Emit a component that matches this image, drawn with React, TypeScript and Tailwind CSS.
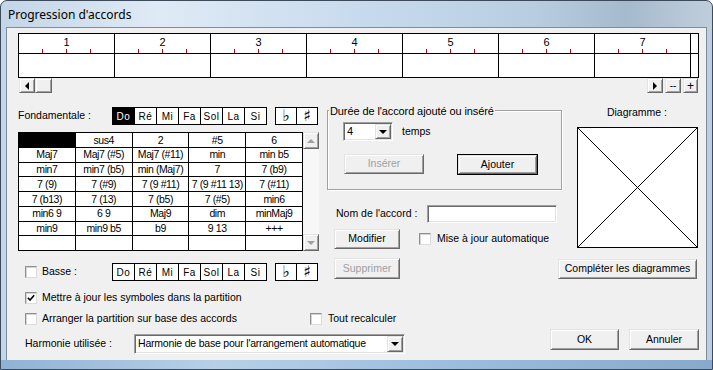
import React from "react";

const sans = "font-['Liberation_Sans',Arial,sans-serif]";
const raised =
  "bg-[#f0f0f0] border border-t-[#e3e3e3] border-l-[#e3e3e3] border-r-[#696969] border-b-[#696969] shadow-[inset_1px_1px_0_#ffffff,inset_-1px_-1px_0_#a0a0a0]";
const sunken =
  "bg-white border border-t-[#a0a0a0] border-l-[#a0a0a0] border-r-white border-b-white shadow-[inset_1px_1px_0_#696969,inset_-1px_-1px_0_#e3e3e3]";

const notes = ["Do", "Ré", "Mi", "Fa", "Sol", "La", "Si"];

const chords = [
  ["", "sus4", "2", "#5", "6"],
  ["Maj7", "Maj7 (#5)", "Maj7 (#11)", "min", "min b5"],
  ["min7", "min7 (b5)", "min (Maj7)", "7", "7 (b9)"],
  ["7 (9)", "7 (#9)", "7 (9 #11)", "7 (9 #11 13)", "7 (#11)"],
  ["7 (b13)", "7 (13)", "7 (b5)", "7 (#5)", "min6"],
  ["min6 9", "6 9", "Maj9", "dim", "minMaj9"],
  ["min9", "min9 b5", "b9", "9 13", "+++"],
  ["", "", "", "", ""],
];

function Btn({
  className = "",
  disabled = false,
  children,
}: {
  className?: string;
  disabled?: boolean;
  children?: React.ReactNode;
}) {
  return (
    <div
      className={`flex items-center justify-center text-[10.5px] ${raised} ${
        disabled ? "text-[#a0a0a0]" : "text-black"
      } ${className}`}
    >
      {children}
    </div>
  );
}

function Check({ checked = false }: { checked?: boolean }) {
  return (
    <div className="w-[12px] h-[12px] shrink-0 bg-white border border-[#8f8f8f] border-r-[#dcdcdc] border-b-[#dcdcdc] shadow-[inset_1px_1px_0_#d4d4d4] flex items-center justify-center">
      {checked && (
        <svg width="8" height="8" viewBox="0 0 8 8">
          <path d="M0.8 3.8 L3 6 L7.2 1.2" fill="none" stroke="#000" strokeWidth="1.6" />
        </svg>
      )}
    </div>
  );
}

function Arrow({ dir, color = "#000" }: { dir: "l" | "r" | "u" | "d"; color?: string }) {
  const pts = {
    l: "4,0 4,8 0,4",
    r: "0,0 0,8 4,4",
    u: "0,4 8,4 4,0",
    d: "0,0 8,0 4,4",
  }[dir];
  const w = dir === "l" || dir === "r" ? 4 : 8;
  const h = dir === "l" || dir === "r" ? 8 : 4;
  return (
    <svg width={w} height={h} viewBox={`0 0 ${w} ${h}`}>
      <polygon points={pts} fill={color} />
    </svg>
  );
}

function NoteRow({ selected }: { selected: number }) {
  return (
    <div className="flex items-stretch h-[18px]">
      <div className="flex border-l border-t border-b border-black bg-white">
        {notes.map((n, i) => (
          <div
            key={n}
            className={`w-[22px] border-r border-black flex items-center justify-center text-[10px] tracking-[0.5px] ${
              i === selected ? "bg-black text-white" : "text-black"
            }`}
          >
            {n}
          </div>
        ))}
      </div>
      <div className="ml-[8px] flex border-l border-t border-b border-black bg-white overflow-hidden">
        <div className="w-[21px] border-r border-black flex items-end justify-center text-[16px] leading-[17px] font-['DejaVu_Sans',sans-serif]">
          ♭
        </div>
        <div className="w-[21px] border-r border-black flex items-center justify-center text-[16px] leading-none font-bold font-['DejaVu_Sans',sans-serif]">
          ♯
        </div>
      </div>
    </div>
  );
}

export default function App() {
  return (
    <div
      className={`w-[713px] h-[370px] overflow-hidden rounded-t-[7px] border border-[#3c4a59] flex flex-col bg-[linear-gradient(90deg,#c3d5e8_0%,#dfeaf5_22%,#c8dbee_50%,#b9cde1_75%,#a6bacd_88%,#bfcedc_100%)] ${sans}`}
    >
      {/* title bar */}
      <div className="h-[27px] shrink-0 flex items-center pl-[7px] pt-[1px] text-[12px] text-black font-['Noto_Sans',sans-serif]">
        Progression d'accords
      </div>

      <div className="flex flex-1 min-h-0">
        <div className="w-[6px] shrink-0" />
        <div className="w-[699px] bg-[#f0f0f0] outline outline-1 outline-[#7d8d9c] flex flex-col pl-[11px] text-[10.5px] text-black">
          {/* ruler */}
          <div className="mt-[5px] flex w-[681px] h-[45px] border border-black bg-white">
            {[1, 2, 3, 4, 5, 6, 7].map((n) => (
              <div key={n} className="w-[96px] border-r border-black flex flex-col">
                <div className="h-[20px] border-b border-black flex flex-col">
                  <div className="h-[15px] flex items-center justify-center text-[11px] leading-none pt-[2px]">{n}</div>
                  <div className="h-[4px] flex pl-[23px] gap-[23px]">
                    <div className="w-px h-full bg-[#c00000]" />
                    <div className="w-px h-full bg-[#c00000]" />
                    <div className="w-px h-full bg-[#c00000]" />
                  </div>
                </div>
                <div className="flex-1" />
              </div>
            ))}
            <div className="flex-1 flex flex-col">
              <div className="h-[20px] border-b border-black" />
            </div>
          </div>

          {/* ruler scrollbar */}
          <div className="flex h-[16px] w-[681px] pl-[1px] items-start">
            <Btn className="w-[16px] h-[15px]">
              <Arrow dir="l" />
            </Btn>
            <Btn className="w-[17px] h-[15px]" />
            <div className="flex-1" />
            <Btn className="w-[16px] h-[15px]">
              <Arrow dir="r" />
            </Btn>
            <Btn className="ml-[2px] w-[16px] h-[15px] text-[10px] leading-none">--</Btn>
            <Btn className="ml-[2px] mr-[1px] w-[15px] h-[15px] text-[12px] leading-none">+</Btn>
          </div>

          {/* middle section */}
          <div className="flex h-[194px]">
            {/* left column */}
            <div className="w-[301px] flex flex-col">
              <div className="mt-[13px] flex items-center">
                <div className="w-[94px]">Fondamentale :</div>
                <NoteRow selected={0} />
              </div>

              <div className="mt-[7px] flex">
                <div className="w-[286px] h-[119px] grid grid-cols-5 grid-rows-8 gap-px p-px bg-black">
                  {chords.flatMap((row, r) =>
                    row.map((c, i) => (
                      <div
                        key={`${r}-${i}`}
                        className={`flex items-center justify-center leading-none whitespace-nowrap overflow-hidden text-[10.5px] tracking-[-0.4px] ${
                          r === 0 && i === 0 ? "bg-black" : "bg-white"
                        }`}
                      >
                        {c}
                      </div>
                    ))
                  )}
                </div>
                <div className="w-[16px] h-[119px] flex flex-col bg-[#f7f7f7]">
                  <Btn className="w-[16px] h-[17px]">
                    <Arrow dir="u" color="#a0a0a0" />
                  </Btn>
                  <div className="flex-1" />
                  <Btn className="w-[16px] h-[17px]">
                    <Arrow dir="d" color="#a0a0a0" />
                  </Btn>
                </div>
              </div>

              <div className="mt-[12px] flex items-center pl-[7px]">
                <Check />
                <div className="ml-[5px] w-[70px]">Basse :</div>
                <NoteRow selected={-1} />
              </div>
            </div>

            {/* middle column */}
            <div className="ml-[8px] w-[235px] flex flex-col">
              <div className="mt-[16px] relative h-[80px] border border-[#a0a0a0] shadow-[inset_1px_1px_0_#ffffff,1px_1px_0_#ffffff] pl-[15px] pt-[11px]">
                <div className="absolute -top-[8px] left-[1px] px-[1px] bg-[#f0f0f0] text-[11px] tracking-[-0.1px]">
                  Durée de l'accord ajouté ou inséré
                </div>
                <div className="flex items-center">
                  <div className={`w-[50px] h-[19px] flex items-center ${sunken} pl-[3px] text-[11px]`}>
                    <div className="flex-1">4</div>
                    <Btn className="w-[16px] h-[15px] mr-[1px]">
                      <Arrow dir="d" />
                    </Btn>
                  </div>
                  <div className="ml-[9px]">temps</div>
                </div>
                <div className="mt-[13px] flex">
                  <Btn disabled className="ml-[1px] w-[80px] h-[20px]">
                    Insérer
                  </Btn>
                  <div className="ml-[33px] border border-black">
                    <Btn className="w-[79px] h-[19px]">Ajouter</Btn>
                  </div>
                </div>
              </div>

              <div className="mt-[15px] flex items-center h-[18px] pl-[9px]">
                <div className="w-[91px]">Nom de l'accord :</div>
                <div className={`w-[130px] h-[18px] ${sunken}`} />
              </div>

              <div className="mt-[6px] flex items-center pl-[7px]">
                <Btn className="w-[66px] h-[20px]">Modifier</Btn>
                <div className="ml-[19px]">
                  <Check />
                </div>
                <div className="ml-[6px]">Mise à jour automatique</div>
              </div>

              <div className="mt-[9px] pl-[7px]">
                <Btn disabled className="w-[66px] h-[21px]">
                  Supprimer
                </Btn>
              </div>
            </div>

            {/* right column */}
            <div className="w-[136px] flex flex-col">
              <div className="mt-[12px] h-[14px] flex items-center justify-center pl-[14px]">Diagramme :</div>
              <div className="mt-[7px] ml-[15px] w-[121px] h-[121px] border border-black bg-white">
                <svg width="119" height="119" viewBox="0 0 119 119" className="block">
                  <line x1="0" y1="0" x2="119" y2="119" stroke="#000" strokeWidth="1" />
                  <line x1="119" y1="0" x2="0" y2="119" stroke="#000" strokeWidth="1" />
                </svg>
              </div>
              <Btn className="mt-[11px] -ml-[4px] w-[139px] h-[20px]">Compléter les diagrammes</Btn>
            </div>
          </div>

          {/* bottom section */}
          <div className="h-[20px] flex items-center pl-[7px]">
            <Check checked />
            <div className="ml-[5px]">Mettre à jour les symboles dans la partition</div>
          </div>
          <div className="mt-[1px] h-[20px] flex items-center pl-[7px]">
            <div className="w-[285px] flex items-center">
              <Check />
              <div className="ml-[5px]">Arranger la partition sur base des accords</div>
            </div>
            <Check />
            <div className="ml-[6px]">Tout recalculer</div>
          </div>
          <div className="flex items-start h-[26px]">
            <div className="mt-[5px] h-[20px] pl-[7px] w-[116px] flex items-center">Harmonie utilisée :</div>
            <div className={`mt-[5px] w-[271px] h-[20px] flex items-center ${sunken} pl-[3px] text-[10.5px] tracking-[-0.2px]`}>
              <div className="flex-1 whitespace-nowrap overflow-hidden">Harmonie de base pour l'arrangement automatique</div>
              <Btn className="w-[16px] h-[16px] mr-[1px]">
                <Arrow dir="d" />
              </Btn>
            </div>
            <Btn className="ml-[145px] w-[69px] h-[21px]">OK</Btn>
            <Btn className="ml-[10px] w-[70px] h-[21px]">Annuler</Btn>
          </div>
        </div>
        <div className="w-[6px] shrink-0" />
      </div>

      <div className="h-[9px] shrink-0 bg-[linear-gradient(90deg,#8fb2d4_0%,#b7d0e8_30%,#9ebfdf_60%,#87a9cc_100%)]" />
    </div>
  );
}
